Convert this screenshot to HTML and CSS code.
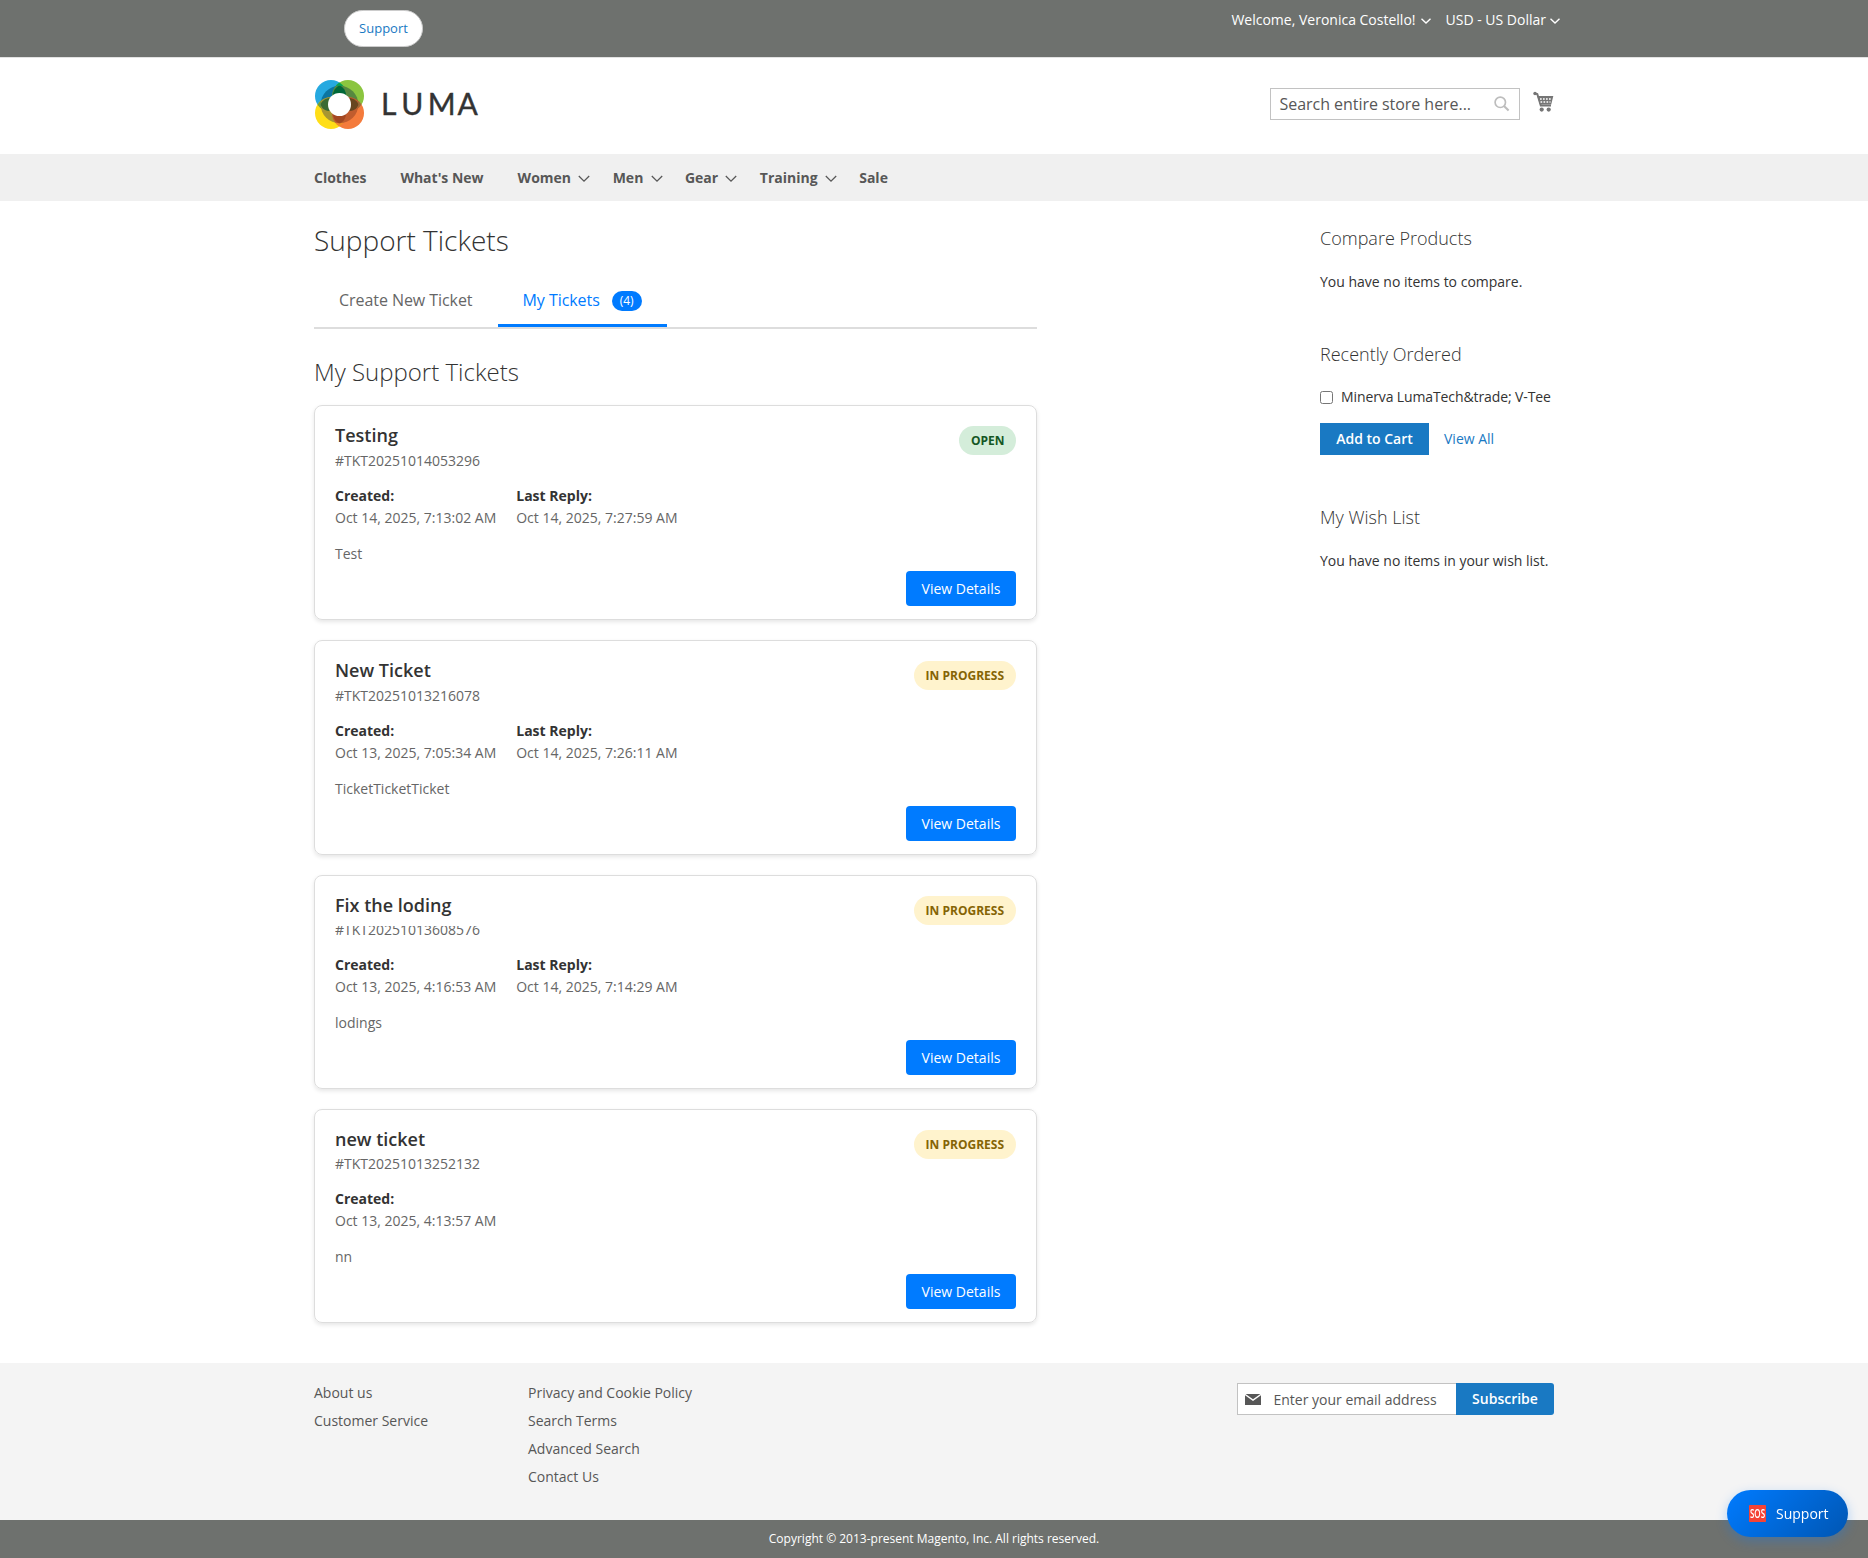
FILE: index.html
```html
<!DOCTYPE html>
<html lang="en">
<head>
<meta charset="utf-8">
<title>Support Tickets</title>
<link rel="stylesheet" href="styles.css">
</head>
<body>
<header>
  <div class="panel">
    <div class="wrap panel-inner">
      <a class="support-pill">Support</a>
      <div class="panel-links">
        <span>Welcome, Veronica Costello!</span>
        <svg class="chev" width="10" height="6" viewBox="0 0 10 6"><path d="M.5.7 5 5 9.500.7" fill="none" stroke="#fff" stroke-width="1.4"/></svg>
        <span class="currency">USD - US Dollar</span>
        <svg class="chev cur-chev" width="10" height="6" viewBox="0 0 10 6"><path d="M.5.7 5 5 9.500.7" fill="none" stroke="#fff" stroke-width="1.4"/></svg>
      </div>
    </div>
  </div>
  <div class="wrap brand">
    <svg class="logo" width="170" height="52" viewBox="0 0 170 52">
      <defs>
        <clipPath id="cb"><circle cx="17" cy="17" r="16"/></clipPath>
        <clipPath id="cg"><circle cx="34" cy="17" r="16"/></clipPath>
        <clipPath id="cy"><circle cx="17" cy="34" r="16"/></clipPath>
        <clipPath id="co"><circle cx="34" cy="34" r="16"/></clipPath>
      </defs>
      <circle cx="17" cy="17" r="16" fill="#26a9e0"/>
      <circle cx="34" cy="17" r="16" fill="#8bc53f"/>
      <circle cx="17" cy="34" r="16" fill="#ffde17"/>
      <circle cx="34" cy="34" r="16" fill="#f47b3c"/>
      <g clip-path="url(#cb)"><circle cx="34" cy="17" r="16" fill="#00a551"/><circle cx="17" cy="34" r="16" fill="#6f9c3c"/></g>
      <g clip-path="url(#co)"><circle cx="34" cy="17" r="16" fill="#9b6b3c"/><circle cx="17" cy="34" r="16" fill="#ef8a2c"/></g>
      <g clip-path="url(#cb)"><circle cx="25.500" cy="25.500" r="18.800" fill="#0c75a0"/></g>
      <g clip-path="url(#cg)"><circle cx="25.500" cy="25.500" r="18.800" fill="#568840"/></g>
      <g clip-path="url(#cy)"><circle cx="25.500" cy="25.500" r="18.800" fill="#a89632"/></g>
      <g clip-path="url(#co)"><circle cx="25.500" cy="25.500" r="18.800" fill="#c05c2e"/></g>
      <path d="M25.500 25.500 15 19C10 20 7 23 6.700 25.500 7 28 10 32 15 32Z" fill="#3a6a34"/>
      <path d="M25.500 25.500 36 19C41 20 44 23 44.300 25.500 44 28 41 32 36 32Z" fill="#684620"/>
      <path d="M25.500 25.500 19 36C20 41 23 44 25.500 44.300 28 44 31 41 32 36Z" fill="#a34822"/>
      <path d="M25.500 25.500 19 15C20 10 23 7 25.500 6.700 28 7 31 10 32 15Z" fill="#006838"/>
      <circle cx="25.500" cy="25.500" r="11.500" fill="#fff"/>
      <text class="logo-text" y="35.800" x="67 87.200 113.700 143.600">LUMA</text>
    </svg>
    <div class="search-area">
      <div class="search">
        <span>Search entire store here...</span>
        <svg width="16" height="16" viewBox="0 0 16 16"><circle cx="6.300" cy="6.300" r="5.200" fill="none" stroke="#bdbdbd" stroke-width="1.700"/><path d="M10 10 14.600 14.600" stroke="#bdbdbd" stroke-width="2.100"/></svg>
      </div>
      <svg class="cart" width="21" height="22" viewBox="0 0 21 22">
        <circle cx="2" cy="2.500" r="1.700" fill="#757575"/>
        <path d="M2 2.500 4.300 3 7.800 14.600H18" fill="none" stroke="#757575" stroke-width="2"/>
        <path d="M4.300 5H20.300L18.200 13.600H7Z" fill="#757575"/>
        <path d="M7 8H18M7.500 11H17.500" stroke="#fff" stroke-width="1.400" stroke-dasharray="1.700 1.300"/>
        <circle cx="8.700" cy="18.600" r="2.100" fill="#757575"/><circle cx="15.700" cy="18.600" r="2.100" fill="#757575"/>
      </svg>
    </div>
  </div>
  <nav class="nav">
    <div class="wrap nav-inner">
      <a>Clothes</a><a>What's New</a>
      <a class="has-menu">Women<svg width="12" height="8" viewBox="0 0 12 8"><path d="M.8 1 6 6.200 11.200 1" fill="none" stroke="#575757" stroke-width="1.300"/></svg></a>
      <a class="has-menu">Men<svg width="12" height="8" viewBox="0 0 12 8"><path d="M.8 1 6 6.200 11.200 1" fill="none" stroke="#575757" stroke-width="1.300"/></svg></a>
      <a class="has-menu">Gear<svg width="12" height="8" viewBox="0 0 12 8"><path d="M.8 1 6 6.200 11.200 1" fill="none" stroke="#575757" stroke-width="1.300"/></svg></a>
      <a class="has-menu">Training<svg width="12" height="8" viewBox="0 0 12 8"><path d="M.8 1 6 6.200 11.200 1" fill="none" stroke="#575757" stroke-width="1.300"/></svg></a>
      <a>Sale</a>
    </div>
  </nav>
</header>
<main class="wrap columns">
  <section class="content">
    <h1>Support Tickets</h1>
    <div class="tabs">
      <a class="tab">Create New Ticket</a>
      <a class="tab active">My Tickets<span class="count">(4)</span></a>
    </div>
    <h2>My Support Tickets</h2>
    <article class="card">
      <div class="card-head"><div><h3>Testing</h3><p class="ticket-id">#TKT20251014053296</p></div><span class="status open">OPEN</span></div>
      <div class="dates"><div><b>Created:</b><span>Oct 14, 2025, 7:13:02 AM</span></div><div><b>Last Reply:</b><span>Oct 14, 2025, 7:27:59 AM</span></div></div>
      <p class="excerpt">Test</p>
      <div class="actions"><a class="details">View Details</a></div>
    </article>
    <article class="card">
      <div class="card-head"><div><h3>New Ticket</h3><p class="ticket-id">#TKT20251013216078</p></div><span class="status progress">IN PROGRESS</span></div>
      <div class="dates"><div><b>Created:</b><span>Oct 13, 2025, 7:05:34 AM</span></div><div><b>Last Reply:</b><span>Oct 14, 2025, 7:26:11 AM</span></div></div>
      <p class="excerpt">TicketTicketTicket</p>
      <div class="actions"><a class="details">View Details</a></div>
    </article>
    <article class="card short">
      <div class="card-head"><div><h3>Fix the loding</h3><p class="ticket-id clipped">#TKT20251013608576</p></div><span class="status progress">IN PROGRESS</span></div>
      <div class="dates"><div><b>Created:</b><span>Oct 13, 2025, 4:16:53 AM</span></div><div><b>Last Reply:</b><span>Oct 14, 2025, 7:14:29 AM</span></div></div>
      <p class="excerpt">lodings</p>
      <div class="actions"><a class="details">View Details</a></div>
    </article>
    <article class="card short">
      <div class="card-head"><div><h3>new ticket</h3><p class="ticket-id">#TKT20251013252132</p></div><span class="status progress">IN PROGRESS</span></div>
      <div class="dates"><div><b>Created:</b><span>Oct 13, 2025, 4:13:57 AM</span></div></div>
      <p class="excerpt">nn</p>
      <div class="actions"><a class="details">View Details</a></div>
    </article>
  </section>
  <aside class="sidebar">
    <div class="block compare"><h4>Compare Products</h4><p>You have no items to compare.</p></div>
    <div class="block recent"><h4>Recently Ordered</h4>
      <label><input type="checkbox">Minerva LumaTech&amp;trade; V-Tee</label>
      <div class="buttons"><a class="add">Add to Cart</a><a class="all">View All</a></div>
    </div>
    <div class="block"><h4>My Wish List</h4><p>You have no items in your wish list.</p></div>
  </aside>
</main>
<footer>
  <div class="foot">
    <div class="wrap foot-inner">
      <ul class="first"><li>About us</li><li>Customer Service</li></ul>
      <ul><li>Privacy and Cookie Policy</li><li>Search Terms</li><li>Advanced Search</li><li>Contact Us</li></ul>
      <div class="newsletter">
        <div class="email"><svg width="16" height="11" viewBox="0 0 16 11"><path d="M0 1.300 8 7 16 1.300V11H0ZM.6 0H15.400L8 5.200Z" fill="#575757"/></svg><span>Enter your email address</span></div>
        <a class="subscribe">Subscribe</a>
      </div>
    </div>
  </div>
  <div class="copyright">Copyright © 2013-present Magento, Inc. All rights reserved.</div>
</footer>
<a class="float">
  <svg width="17" height="17" viewBox="0 0 17 17"><rect width="17" height="17" rx=".8" fill="#f44336"/><text x=".9" y="13.200" class="sos" textLength="15.200" lengthAdjust="spacingAndGlyphs">SOS</text></svg>
  <span>Support</span>
</a>
</body>
</html>
```
FILE: styles.css
```css
* { box-sizing: border-box; }
body { margin: 0; background: #fff; color: #333; font: 14px/20px "Open Sans", sans-serif; height: 1558px; overflow: hidden; }
h1, h2, h3, h4, p, ul { margin: 0; padding: 0; }
ul { list-style: none; }
svg { display: block; flex: none; overflow: visible; }
.wrap { width: 1240px; margin: 0 auto; }

.panel { height: 58px; background: #6e716e; border-bottom: 1px solid #e2e2e2; color: #fff; }
.panel-inner { display: flex; justify-content: space-between; align-items: flex-start; padding: 10px 0 0 30px; }
.support-pill { width: 79px; height: 37px; border: 1px solid #ccc; border-radius: 19px; background: #fff; color: #1979c3; font-size: 13px; line-height: 35px; text-align: center; }
.panel-links { display: flex; align-items: center; margin-right: -6px; }
.panel-links .chev { margin: 1px 0 0 5px; }
.panel-links .currency { margin-left: 15px; }
.panel-links .cur-chev { margin-left: 4px; }

.brand { display: flex; justify-content: space-between; height: 96px; padding-top: 21px; }
.logo-text { font: 400 30px Lato, sans-serif; fill: #333; stroke: #333; stroke-width: .4px; }
.search-area { display: flex; }
.search { display: flex; align-items: center; justify-content: space-between; width: 250px; height: 32px; margin-top: 9px; border: 1px solid #c2c2c2; padding: 0 9px; color: #575757; font-size: 16px; letter-spacing: -.04px; }
.cart { margin: 12px 0 0 13.5px; }

.nav { height: 47px; background: #f0f0f0; }
.nav-inner { display: flex; height: 47px; align-items: center; gap: 34px; color: #575757; font-weight: 700; }
.has-menu { display: flex; align-items: center; gap: 7.3px; margin-right: -11.7px; }
.has-menu svg { margin-top: 2px; }

.columns { display: flex; justify-content: space-between; height: 1162px; }
.content { width: 723px; padding-top: 21px; }
h1 { font-size: 28px; line-height: 36px; font-weight: 300; }
.tabs { display: flex; height: 49px; margin-top: 22px; border-bottom: 2px solid #ddd; color: #666; font-size: 16px; }
.tab { display: flex; align-items: flex-start; padding: 10px 25px 0; border-bottom: 3px solid transparent; letter-spacing: -.06px; }
.tab.active { color: #007bff; border-color: #007bff; }
.count { width: 30px; height: 20px; margin-left: 12px; margin-top: 1px; border-radius: 10px; background: #007bff; color: #fff; font-size: 12px; text-align: center; }
h2 { margin-top: 27px; font-size: 24px; line-height: 32px; font-weight: 300; }
.card { display: flex; flex-direction: column; height: 215px; padding: 20px 20px 13px; border: 1px solid #ddd; border-radius: 8px; box-shadow: 0 2px 4px rgba(0,0,0,.1); margin-bottom: 20px; }
h2 + .card { margin-top: 17px; }
.card.short { height: 214px; }
.card-head { display: flex; flex: none; justify-content: space-between; align-items: flex-start; height: 54px; }
.short .card-head { height: 53px; }
h3 { font-size: 18px; line-height: 18px; font-weight: 600; }
.ticket-id { margin-top: 7px; color: #666; }
.short .ticket-id { margin-top: 6px; }
.clipped { clip-path: inset(6px 0 0 0); }
.status { height: 29px; padding: 0 12px; border-radius: 15px; font-size: 12px; line-height: 29px; font-weight: 700; }
.open { padding: 0 11.5px; background: #d4edda; color: #155724; }
.progress { background: #fff3cd; color: #856404; }
.dates { display: flex; gap: 20px; margin-top: 6px; color: #666; }
.dates b { display: block; color: #333; margin-bottom: 2px; }
.dates span { display: block; }
.excerpt { margin-top: 16px; color: #666; }
.actions { display: flex; justify-content: flex-end; margin-top: 7px; }
.details { width: 110px; height: 35px; border-radius: 4px; background: #007bff; color: #fff; line-height: 35px; text-align: center; }

.sidebar { width: 234px; padding-top: 27px; }
h4 { font-size: 18px; line-height: 20px; font-weight: 300; }
.block p { margin-top: 24px; }
.compare { height: 116px; }
.recent { height: 163px; }
.recent label { display: flex; align-items: center; margin-top: 23px; letter-spacing: -.11px; }
input { width: 13px; height: 13px; margin: 0 8px 0 0; }
.buttons { display: flex; align-items: center; margin-top: 16px; line-height: 32px; }
.add { width: 109px; background: #1979c3; color: #fff; font-weight: 600; text-align: center; }
.all { margin-left: 15px; color: #1979c3; }

.foot { height: 157px; background: #f4f4f4; color: #575757; }
.foot-inner { display: flex; padding-top: 16px; }
.foot ul { line-height: 28px; }
.foot .first { width: 214px; }
.newsletter { display: flex; margin: 4px 0 0 auto; height: 32px; }
.email { display: flex; align-items: center; width: 219px; padding: 0 0 0 7px; border: 1px solid #c2c2c2; border-right: 0; background: #fff; }
.email span { margin: 2px 0 0 12.5px; }
.subscribe { width: 98px; border-radius: 0 3px 3px 0; background: #1979c3; color: #fff; font-weight: 600; line-height: 31px; text-align: center; }
.copyright { height: 38px; background: #6e716e; color: #fff; font-size: 12px; line-height: 37px; text-align: center; }
.float { position: fixed; left: 1727px; top: 1490px; display: flex; align-items: center; width: 121px; height: 47px; padding-left: 22px; gap: 10px; border-radius: 24px; background: linear-gradient(135deg, #007bff, #0056b3); box-shadow: 0 4px 12px rgba(0,123,255,.3); color: #fff; }
.sos { font: 600 13px "Open Sans", sans-serif; fill: #fff; }
```
